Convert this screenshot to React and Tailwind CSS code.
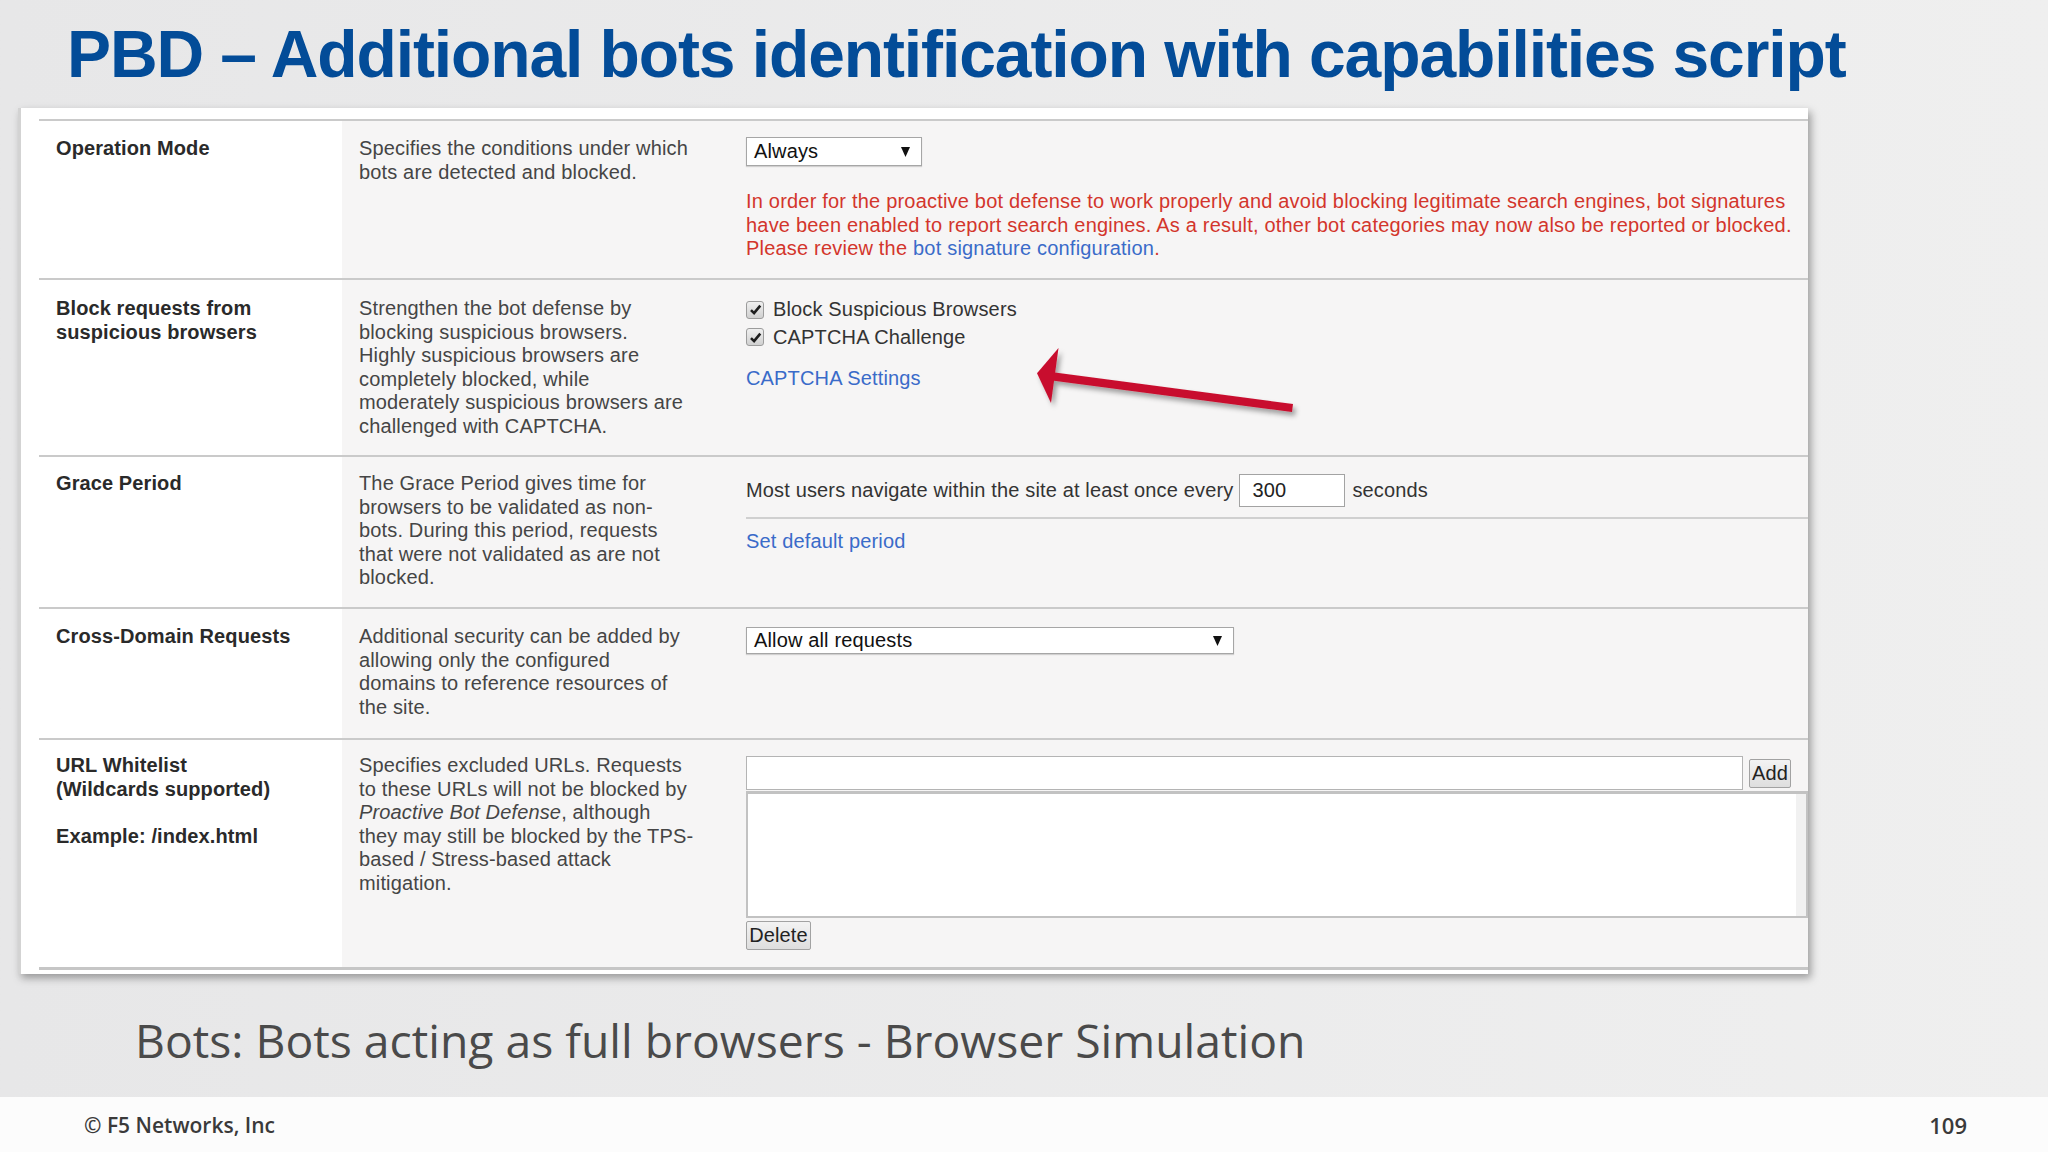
import React from "react";

function Check() {
  return (
    <span className="inline-flex h-[18px] w-[18px] shrink-0 items-center justify-center rounded-[3px] border border-[#9c9c9c] bg-[linear-gradient(#f0f0f0,#d0d0d0)]">
      <svg viewBox="0 0 12 12" className="h-[13px] w-[13px]">
        <path d="M1.8 6.6 L4.7 9.4 L10.4 2.4" fill="none" stroke="#1e1e1e" strokeWidth="2.4" />
      </svg>
    </span>
  );
}

function Tri() {
  return (
    <svg viewBox="0 0 9 10" className="h-[10px] w-[9px]">
      <polygon points="0,0 9,0 4.5,10" fill="#111" />
    </svg>
  );
}

function Lines({ lines }) {
  return lines.map((l, i) => (
    <div key={i} className="whitespace-nowrap">
      {l}
    </div>
  ));
}

export default function App() {
  return (
    <div
      className="relative flex h-[1152px] w-[2048px] flex-col overflow-hidden bg-linear-to-r from-[#e7e7e8] to-[#efefef]"
      style={{ fontFamily: '"Liberation Sans", Arial, sans-serif' }}
    >
      {/* Title */}
      <div className="pl-[67px] pt-[21px] text-[66px] font-bold leading-[66px] tracking-[-1.1px] whitespace-nowrap text-[#034c98]">
        PBD – Additional bots identification with capabilities script
      </div>

      {/* Panel */}
      <div className="mt-[21px] ml-[18px] h-[866px] w-[1790px] border-l-[3px] border-[#d3d3d3] bg-white pt-[11px] pl-[18px] shadow-[3px_4px_8px_rgba(0,0,0,0.35)]">
        <div className="border-t-2 border-[#cacaca] text-[20px] leading-[23.5px] tracking-[0.15px]">
          {/* Row 1 */}
          <div className="grid h-[159px] grid-cols-[303px_404px_1fr] border-b-2 border-[#cacaca]">
            <div className="bg-white pl-[17px] pt-[16px] font-bold tracking-[0.1px] text-[#2a2a2a]">
              <Lines lines={["Operation Mode"]} />
            </div>
            <div className="bg-[#f6f5f5] pl-[17px] pt-[16px] text-[#454545]">
              <Lines lines={["Specifies the conditions under which", "bots are detected and blocked."]} />
            </div>
            <div className="bg-[#f6f5f5] pt-[16px]">
              <div className="flex h-[29px] w-[176px] items-center justify-between border border-[#a6a6a6] bg-white pl-[7px] pr-[11px] text-[#111] shadow-[0_1px_1px_rgba(0,0,0,0.15)]">
                <span>Always</span>
                <Tri />
              </div>
              <div className="mt-[24px] tracking-[0.2px] text-[#d3352c]">
                <Lines
                  lines={[
                    "In order for the proactive bot defense to work properly and avoid blocking legitimate search engines, bot signatures",
                    "have been enabled to report search engines. As a result, other bot categories may now also be reported or blocked.",
                    <>
                      Please review the <span className="text-[#3a6bc9]">bot signature configuration</span>.
                    </>,
                  ]}
                />
              </div>
            </div>
          </div>

          {/* Row 2 */}
          <div className="grid h-[177px] grid-cols-[303px_404px_1fr] border-b-2 border-[#cacaca]">
            <div className="bg-white pl-[17px] pt-[17px] font-bold tracking-[0.1px] text-[#2a2a2a]">
              <Lines lines={["Block requests from", "suspicious browsers"]} />
            </div>
            <div className="bg-[#f6f5f5] pl-[17px] pt-[17px] text-[#454545]">
              <Lines
                lines={[
                  "Strengthen the bot defense by",
                  "blocking suspicious browsers.",
                  "Highly suspicious browsers are",
                  "completely blocked, while",
                  "moderately suspicious browsers are",
                  "challenged with CAPTCHA.",
                ]}
              />
            </div>
            <div className="bg-[#f6f5f5] pt-[16px] text-[#333]">
              <div className="flex h-[27.5px] items-center gap-[9px]">
                <Check />
                <span>Block Suspicious Browsers</span>
              </div>
              <div className="flex h-[27.5px] items-center gap-[9px]">
                <Check />
                <span>CAPTCHA Challenge</span>
              </div>
              <div className="mt-[16px] text-[#3a6bc9]">CAPTCHA Settings</div>
            </div>
          </div>

          {/* Row 3 */}
          <div className="grid h-[152px] grid-cols-[303px_404px_1fr] border-b-2 border-[#cacaca]">
            <div className="bg-white pl-[17px] pt-[15px] font-bold tracking-[0.1px] text-[#2a2a2a]">
              <Lines lines={["Grace Period"]} />
            </div>
            <div className="bg-[#f6f5f5] pl-[17px] pt-[15px] text-[#454545]">
              <Lines
                lines={[
                  "The Grace Period gives time for",
                  "browsers to be validated as non-",
                  "bots. During this period, requests",
                  "that were not validated as are not",
                  "blocked.",
                ]}
              />
            </div>
            <div className="bg-[#f6f5f5] pt-[17px] text-[#333]">
              <div className="flex h-[33px] items-center whitespace-nowrap">
                <span>Most users navigate within the site at least once every</span>
                <div className="ml-[6px] flex h-[33px] w-[106px] items-center border border-[#a3a3a3] bg-white pl-[12px] text-[#222]">
                  300
                </div>
                <span className="ml-[7px]">seconds</span>
              </div>
              <div className="mt-[10px] h-[2px] bg-[#d0d0d0]" />
              <div className="mt-[11px] text-[#3a6bc9]">Set default period</div>
            </div>
          </div>

          {/* Row 4 */}
          <div className="grid h-[131px] grid-cols-[303px_404px_1fr] border-b-2 border-[#cacaca]">
            <div className="bg-white pl-[17px] pt-[16px] font-bold tracking-[0.1px] text-[#2a2a2a]">
              <Lines lines={["Cross-Domain Requests"]} />
            </div>
            <div className="bg-[#f6f5f5] pl-[17px] pt-[16px] text-[#454545]">
              <Lines
                lines={[
                  "Additional security can be added by",
                  "allowing only the configured",
                  "domains to reference resources of",
                  "the site.",
                ]}
              />
            </div>
            <div className="bg-[#f6f5f5] pt-[18px]">
              <div className="flex h-[27px] w-[488px] items-center justify-between border border-[#a6a6a6] bg-white pl-[7px] pr-[11px] text-[#111] shadow-[0_1px_1px_rgba(0,0,0,0.15)]">
                <span>Allow all requests</span>
                <Tri />
              </div>
            </div>
          </div>

          {/* Row 5 */}
          <div className="grid h-[230px] grid-cols-[303px_404px_1fr] border-b-[3px] border-[#c6c6c6]">
            <div className="bg-white pl-[17px] pt-[14px] font-bold tracking-[0.1px] text-[#2a2a2a]">
              <Lines lines={["URL Whitelist", "(Wildcards supported)", "\u00a0", "Example: /index.html"]} />
            </div>
            <div className="bg-[#f6f5f5] pl-[17px] pt-[14px] text-[#454545]">
              <Lines
                lines={[
                  "Specifies excluded URLs. Requests",
                  "to these URLs will not be blocked by",
                  <>
                    <i>Proactive Bot Defense</i>, although
                  </>,
                  "they may still be blocked by the TPS-",
                  "based / Stress-based attack",
                  "mitigation.",
                ]}
              />
            </div>
            <div className="bg-[#f6f5f5] pt-[16px] text-[#222]">
              <div className="flex items-start">
                <div className="h-[34px] w-[997px] border border-[#b4b4b4] bg-white" />
                <div className="mt-[3px] ml-[6px] flex h-[29px] w-[42px] items-center justify-center rounded-[2px] border border-[#a2a2a2] bg-[linear-gradient(#f3f3f3,#dedede)]">
                  Add
                </div>
              </div>
              <div className="mt-[1px] flex h-[127px] w-full border-2 border-t-[3px] border-[#c2c2c2] bg-white">
                <div className="flex-1" />
                <div className="w-[10px] bg-[#f1f1f1]" />
              </div>
              <div className="mt-[3px] flex h-[29px] w-[65px] items-center justify-center rounded-[2px] border border-[#a2a2a2] bg-[linear-gradient(#f3f3f3,#dedede)]">
                Delete
              </div>
            </div>
          </div>
        </div>
      </div>

      {/* Arrow overlay */}
      <svg className="absolute left-[1020px] top-[330px] h-[110px] w-[300px]" viewBox="0 0 300 110">
        <defs>
          <filter id="sh" x="-10%" y="-30%" width="130%" height="180%">
            <feDropShadow dx="3" dy="4" stdDeviation="2.5" floodColor="#000" floodOpacity="0.35" />
          </filter>
        </defs>
        <g filter="url(#sh)" fill="#c8102e">
          <polygon points="17,43.3 38.5,18 31,73" />
          <polygon points="33,42.3 273,74 272,82 32,50.5" />
        </g>
      </svg>

      {/* Subtitle */}
      <div
        className="mt-[36px] pl-[135px] text-[46.3px] leading-[62px] whitespace-nowrap text-[#4a4a4a]"
        style={{ fontFamily: '"Open Sans", sans-serif' }}
      >
        Bots: Bots acting as full browsers - Browser Simulation
      </div>

      {/* Footer */}
      <div
        className="mt-auto flex h-[55px] items-center justify-between bg-[#fcfcfc] pl-[84px] pr-[81px] text-[#3a3a3a]"
        style={{ fontFamily: '"Open Sans", sans-serif' }}
      >
        <span className="text-[21px] leading-[26px] font-semibold">© F5 Networks, Inc</span>
        <span className="text-[22px] leading-[26px] font-semibold">109</span>
      </div>
    </div>
  );
}
